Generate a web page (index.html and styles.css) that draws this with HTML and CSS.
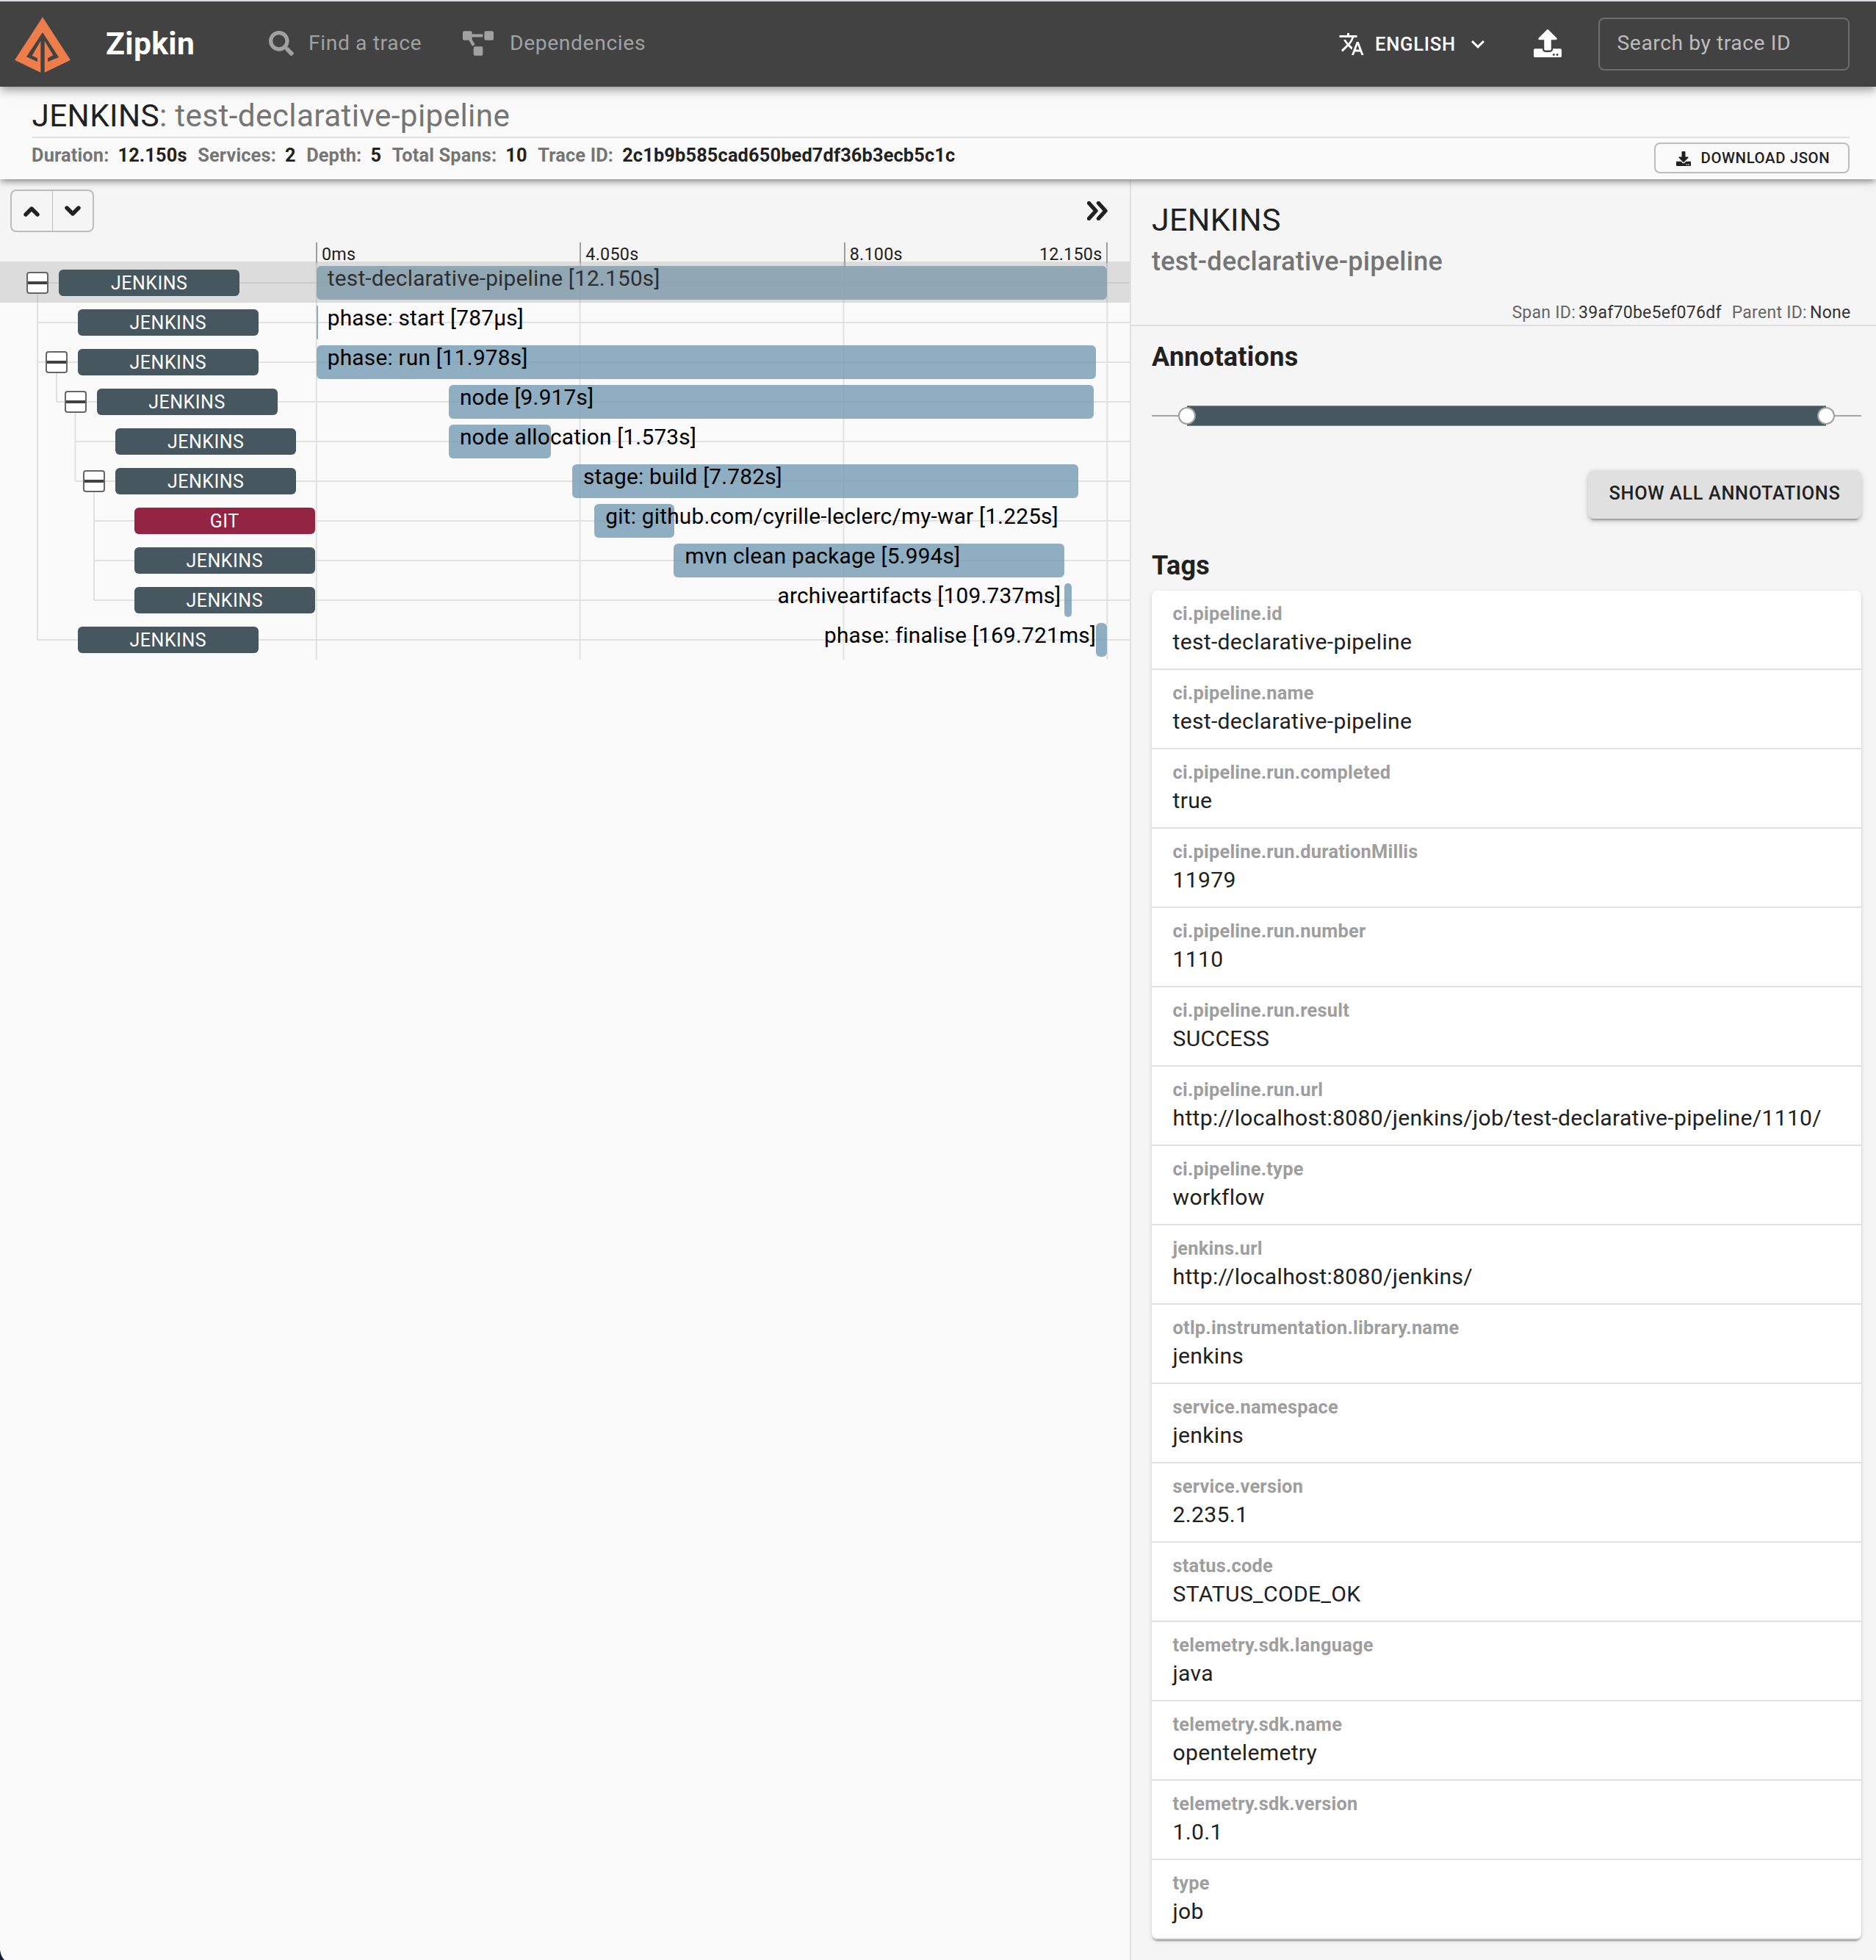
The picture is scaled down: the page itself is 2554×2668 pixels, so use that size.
FILE: index.html
```html
<!DOCTYPE html>
<html lang="en">
<head>
<meta charset="utf-8">
<title>Zipkin</title>
<link rel="stylesheet" href="styles.css">
</head>
<body>
<header class="appbar">
  <svg class="logo" viewBox="60 68 228 226"><path d="M174 68 288 243 182 294V165L217 223 195 236V250L240 232 174 130 108 230 153 250V236L131 225 166 165V294L60 243Z"/></svg>
  <div class="brand">Zipkin</div>
  <nav class="nav">
    <a class="nav-link"><svg class="ico-search" viewBox="0 0 512 512"><path d="M505 442.7L405.3 343c-4.5-4.5-10.6-7-17-7H372c27.6-35.3 44-79.7 44-128C416 93.1 322.9 0 208 0S0 93.1 0 208s93.1 208 208 208c48.3 0 92.7-16.4 128-44v16.3c0 6.4 2.5 12.5 7 17l99.7 99.7c9.4 9.4 24.6 9.4 33.9 0l28.3-28.3c9.4-9.4 9.4-24.6.1-34zM208 336c-70.7 0-128-57.2-128-128 0-70.7 57.2-128 128-128 70.7 0 128 57.2 128 128 0 70.7-57.2 128-128 128z"/></svg><span>Find a trace</span></a>
    <a class="nav-link"><svg class="ico-deps" viewBox="0 0 640 512"><path d="M384 320H256c-17.67 0-32 14.33-32 32v128c0 17.67 14.33 32 32 32h128c17.67 0 32-14.33 32-32V352c0-17.67-14.33-32-32-32zM192 32c0-17.67-14.33-32-32-32H32C14.33 0 0 14.33 0 32v128c0 17.67 14.33 32 32 32h95.72l73.16 128.04C211.98 300.98 232.4 288 256 288h.28L192 175.51V128h224V64H192V32zM608 0H480c-17.67 0-32 14.33-32 32v128c0 17.67 14.33 32 32 32h128c17.67 0 32-14.33 32-32V32c0-17.67-14.33-32-32-32z"/></svg><span>Dependencies</span></a>
  </nav>
  <div class="tools">
    <div class="language">
      <svg class="ico36" viewBox="0 0 24 24"><path d="M12.87 15.07l-2.54-2.51.03-.03c1.74-1.94 2.98-4.17 3.71-6.53H17V4h-7V2H8v2H1v1.99h11.17C11.5 7.92 10.44 9.75 9 11.35 8.07 10.32 7.3 9.19 6.69 8h-2c.73 1.63 1.73 3.17 2.98 4.56l-5.09 5.02L4 19l5-5 3.11 3.11.76-2.04zM18.5 10h-2L12 22h2l1.12-3h4.75L21 22h2l-4.5-12zm-2.62 7l1.62-4.33L19.12 17h-3.24z"/></svg>
      <span class="language-name">ENGLISH</span>
      <svg class="ico36" viewBox="0 0 24 24"><path d="M16.59 8.59L12 13.17 7.41 8.59 6 10l6 6 6-6z"/></svg>
    </div>
    <svg class="ico-upload" viewBox="0 0 512 512"><path d="M296 384h-80c-13.3 0-24-10.7-24-24V192h-87.7c-17.8 0-26.7-21.5-14.1-34.1L242.3 5.7c7.5-7.5 19.8-7.5 27.3 0l152.2 152.2c12.6 12.6 3.7 34.1-14.1 34.1H320v168c0 13.3-10.7 24-24 24zm216-8v112c0 13.3-10.7 24-24 24H24c-13.3 0-24-10.7-24-24V376c0-13.3 10.7-24 24-24h136v8c0 30.9 25.1 56 56 56h80c30.9 0 56-25.1 56-56v-8h136c13.3 0 24 10.7 24 24zm-124 88c0-11-9-20-20-20s-20 9-20 20 9 20 20 20 20-9 20-20zm64 0c0-11-9-20-20-20s-20 9-20 20 9 20 20 20 20-9 20-20z"/></svg>
    <div class="trace-search">Search by trace ID</div>
  </div>
</header>

<section class="summary">
  <h1 class="summary-title"><span class="strong">JENKINS</span>: test-declarative-pipeline</h1>
  <div class="summary-row">
    <dl class="facts">
      <div class="fact"><dt>Duration:</dt><dd>12.150s</dd></div>
      <div class="fact"><dt>Services:</dt><dd>2</dd></div>
      <div class="fact"><dt>Depth:</dt><dd>5</dd></div>
      <div class="fact"><dt>Total Spans:</dt><dd>10</dd></div>
      <div class="fact"><dt>Trace ID:</dt><dd>2c1b9b585cad650bed7df36b3ecb5c1c</dd></div>
    </dl>
    <div class="download"><svg class="ico-download" viewBox="0 0 512 512"><path d="M216 0h80c13.3 0 24 10.7 24 24v168h87.7c17.8 0 26.7 21.5 14.1 34.1L269.7 378.3c-7.5 7.5-19.8 7.5-27.3 0L90.1 226.1c-12.6-12.6-3.7-34.1 14.1-34.1H192V24c0-13.3 10.7-24 24-24zm296 376v112c0 13.3-10.7 24-24 24H24c-13.3 0-24-10.7-24-24V376c0-13.3 10.7-24 24-24h146.7l49 49c20.1 20.1 52.5 20.1 72.6 0l49-49H488c13.3 0 24 10.7 24 24zm-124 88c0-11-9-20-20-20s-20 9-20 20 9 20 20 20 20-9 20-20zm64 0c0-11-9-20-20-20s-20 9-20 20 9 20 20 20 20-9 20-20z"/></svg><span>DOWNLOAD JSON</span></div>
  </div>
</section>

<main class="main">
  <section class="timeline">
    <div class="timeline-head">
      <div class="controls">
        <div class="stepper">
          <span class="step"><svg viewBox="0 0 22 15"><path d="M3 12 11 4 19 12"/></svg></span>
          <span class="step"><svg viewBox="0 0 22 15"><path d="M3 3 11 11 19 3"/></svg></span>
        </div>
        <svg class="ico-expand" viewBox="0 0 28 26"><path d="M2.5 2.5 12 13 2.5 23.5M15.5 2.5 25 13 15.5 23.5"/></svg>
      </div>
      <div class="axis"><span class="tick">0ms</span><span class="tick">4.050s</span><span class="tick tick-last">8.100s<span>12.150s</span></span></div>
    </div>
    <div class="rows">
      <svg class="guides" viewBox="0 0 1538 540" fill="none">
        <path class="guide" d="M51 27V513M77 135V189M102.500 189V297M128 297V459"/>
        <path class="guide" d="M51 27H1538M51 81H1538M51 135H1538M77 189H1538M102.500 243H1538M102.500 297H1538M128 351H1538M128 405H1538M128 459H1538M51 513H1538"/>
        <path class="guide" d="M430.800 0V540M789.500 0V540M1148.500 0V540M1507.300 0V540"/>
      </svg>
      <div class="row selected" style="--depth:0;--start:0%;--width:100%"><div class="node"><i class="toggle"></i><span class="badge">JENKINS</span></div><div class="track"><div class="bar"><span class="label">test-declarative-pipeline [12.150s]</span></div></div></div>
      <div class="row" style="--depth:1;--start:0%;--width:.2%"><div class="node"><i class="leaf"></i><span class="badge">JENKINS</span></div><div class="track"><div class="bar"><span class="label">phase: start [787µs]</span></div></div></div>
      <div class="row" style="--depth:1;--start:0%;--width:98.58%"><div class="node"><i class="toggle"></i><span class="badge">JENKINS</span></div><div class="track"><div class="bar"><span class="label">phase: run [11.978s]</span></div></div></div>
      <div class="row" style="--depth:2;--start:16.73%;--width:81.58%"><div class="node"><i class="toggle"></i><span class="badge">JENKINS</span></div><div class="track"><div class="bar"><span class="label">node [9.917s]</span></div></div></div>
      <div class="row" style="--depth:3;--start:16.73%;--width:12.95%"><div class="node"><i class="leaf"></i><span class="badge">JENKINS</span></div><div class="track"><div class="bar"><span class="label">node allocation [1.573s]</span></div></div></div>
      <div class="row" style="--depth:3;--start:32.34%;--width:64.05%"><div class="node"><i class="toggle"></i><span class="badge">JENKINS</span></div><div class="track"><div class="bar"><span class="label">stage: build [7.782s]</span></div></div></div>
      <div class="row" style="--depth:4;--start:35.16%;--width:10.08%"><div class="node"><i class="leaf"></i><span class="badge git">GIT</span></div><div class="track"><div class="bar"><span class="label">git: github.com/cyrille-leclerc/my-war [1.225s]</span></div></div></div>
      <div class="row" style="--depth:4;--start:45.22%;--width:49.33%"><div class="node"><i class="leaf"></i><span class="badge">JENKINS</span></div><div class="track"><div class="bar"><span class="label">mvn clean package [5.994s]</span></div></div></div>
      <div class="row" style="--depth:4;--start:94.64%;--width:.9%"><div class="node"><i class="leaf"></i><span class="badge">JENKINS</span></div><div class="track"><div class="bar"><span class="label before spaced">archiveartifacts [109.737ms]</span></div></div></div>
      <div class="row" style="--depth:1;--start:98.6%;--width:1.4%"><div class="node"><i class="leaf"></i><span class="badge">JENKINS</span></div><div class="track"><div class="bar"><span class="label before">phase: finalise [169.721ms]</span></div></div></div>
    </div>
  </section>

  <aside class="detail">
    <div class="detail-head">
      <h2 class="service">JENKINS</h2>
      <h3 class="span-name">test-declarative-pipeline</h3>
      <div class="ids"><span>Span ID:<b>39af70be5ef076df</b></span><span>Parent ID:<b>None</b></span></div>
    </div>
    <div class="detail-body">
      <h4 class="heading">Annotations</h4>
      <div class="slider"><i class="knob"></i><i class="range"></i><i class="knob"></i></div>
      <div class="show-all">SHOW ALL ANNOTATIONS</div>
      <h4 class="heading heading-tags">Tags</h4>
      <dl class="tags">
        <div class="tag"><dt>ci.pipeline.id</dt><dd>test-declarative-pipeline</dd></div>
        <div class="tag"><dt>ci.pipeline.name</dt><dd>test-declarative-pipeline</dd></div>
        <div class="tag"><dt>ci.pipeline.run.completed</dt><dd>true</dd></div>
        <div class="tag"><dt>ci.pipeline.run.durationMillis</dt><dd>11979</dd></div>
        <div class="tag"><dt>ci.pipeline.run.number</dt><dd>1110</dd></div>
        <div class="tag"><dt>ci.pipeline.run.result</dt><dd>SUCCESS</dd></div>
        <div class="tag"><dt>ci.pipeline.run.url</dt><dd>http://localhost:8080/jenkins/job/test-declarative-pipeline/1110/</dd></div>
        <div class="tag"><dt>ci.pipeline.type</dt><dd>workflow</dd></div>
        <div class="tag"><dt>jenkins.url</dt><dd>http://localhost:8080/jenkins/</dd></div>
        <div class="tag"><dt>otlp.instrumentation.library.name</dt><dd>jenkins</dd></div>
        <div class="tag"><dt>service.namespace</dt><dd>jenkins</dd></div>
        <div class="tag"><dt>service.version</dt><dd>2.235.1</dd></div>
        <div class="tag"><dt>status.code</dt><dd>STATUS_CODE_OK</dd></div>
        <div class="tag"><dt>telemetry.sdk.language</dt><dd>java</dd></div>
        <div class="tag"><dt>telemetry.sdk.name</dt><dd>opentelemetry</dd></div>
        <div class="tag"><dt>telemetry.sdk.version</dt><dd>1.0.1</dd></div>
        <div class="tag"><dt>type</dt><dd>job</dd></div>
      </dl>
    </div>
  </aside>
</main>
<svg class="corner" viewBox="0 0 6 14"><path d="M0 0Q1 9 6 14H0Z"/></svg>
</body>
</html>
```
FILE: styles.css
```css
* { box-sizing: border-box; }

body {
  margin: 0;
  width: 2554px;
  height: 2668px;
  overflow: hidden;
  position: relative;
  display: flex;
  flex-direction: column;
  background: #fafafa;
  color: #212121;
  font-family: Roboto, sans-serif;
  font-size: 30px;
}

h1, h2, h3, h4, dl, dt, dd { margin: 0; font-weight: 400; }
svg { display: block; flex: none; fill: currentColor; }

/* Top bar */
.appbar {
  height: 118px;
  flex: none;
  border-top: 2px solid #dbdae2;
  background: #424242;
  color: #fff;
  display: flex;
  align-items: center;
  padding: 0 36px 0 20px;
  position: relative;
  z-index: 3;
  box-shadow: 0 4px 8px -2px rgba(0, 0, 0, .2), 0 8px 10px rgba(0, 0, 0, .14), 0 2px 20px rgba(0, 0, 0, .12);
}
.logo { width: 76px; height: 76px; color: #ed7d4b; margin-top: 1px; }
.brand { margin: -2px 0 0 48px; width: 222px; font-size: 42.6px; font-weight: 700; letter-spacing: .009em; }
.nav { display: flex; color: #a1a1a1; }
.nav-link { display: flex; align-items: center; font-size: 28.3px; letter-spacing: .021em; }
.nav-link span { margin-top: -4px; }
.nav-link:first-child { width: 264px; }
.ico-search { width: 34px; height: 34px; margin: -2px 20.5px 0 -.5px; }
.ico-deps { width: 42px; height: 34px; margin: -2px 22px 0 0; }
.tools { margin-left: auto; display: flex; align-items: center; }
.language { display: flex; align-items: center; width: 266.5px; }
.ico36 { width: 36px; height: 36px; }
.language-name { font-size: 25.6px; font-weight: 500; letter-spacing: .0286em; margin: -1px 0 0 14.5px; width: 122px; }
.ico-upload { width: 38px; height: 38px; margin-right: 50px; margin-top: -2px; }
.trace-search {
  width: 342px;
  height: 72px;
  border: 2px solid #6d6d6d;
  border-radius: 8px;
  padding-left: 23.5px;
  color: #bcbcbc;
  font-size: 28.3px;
  letter-spacing: .019em;
  line-height: 65px;
}

/* Trace summary */
.summary {
  height: 126px;
  flex: none;
  background: #fafafa;
  padding: 0 36px 0 43.5px;
  position: relative;
  z-index: 2;
  box-shadow: 0 6px 6px -4px rgba(0, 0, 0, .2), 0 4px 8px rgba(0, 0, 0, .2), 0 2px 16px rgba(0, 0, 0, .12);
}
.summary-title {
  height: 70px;
  line-height: 79px;
  border-bottom: 2px solid #e0e0e0;
  color: #757575;
  font-size: 42.3px;
  letter-spacing: .0085em;
}
.strong { color: #212121; }
.summary-row { display: flex; justify-content: space-between; height: 54px; padding-top: 6px; }
.facts { display: flex; gap: 14.5px; margin-left: -.5px; font-size: 25.35px; letter-spacing: .0062em; line-height: 35px; }
.fact { display: flex; gap: 12px; }
.facts dt { color: #757575; font-weight: 700; }
.facts dd { font-weight: 700; }
.download {
  width: 266px;
  height: 42px;
  border: 2px solid #bdbdbd;
  border-radius: 8px;
  display: flex;
  align-items: center;
  padding-left: 28px;
  gap: 13.5px;
  font-size: 20.4px;
  font-weight: 500;
  letter-spacing: .029em;
}
.ico-download { width: 20px; height: 20px; margin-top: 2px; }

/* Timeline */
.main { display: flex; flex: 1; min-height: 0; }
.timeline { width: 1538px; flex: none; }
.timeline-head { height: 112px; background: #f5f5f5; padding-top: 14px; }
.controls { display: flex; justify-content: space-between; padding: 0 30px 0 14px; }
.stepper { display: flex; width: 114px; height: 58px; border: 2px solid #bdbdbd; border-radius: 8px; }
.step { flex: 1; display: flex; justify-content: center; padding-top: 20px; }
.step + .step { border-left: 1px solid #bdbdbd; }
.step svg { width: 22px; height: 15px; }
.step path, .ico-expand path { fill: none; stroke: #212121; stroke-width: 5.4; stroke-linecap: round; stroke-linejoin: round; }
.ico-expand { width: 28px; height: 26px; margin-top: 16px; }
.axis { display: grid; grid-template-columns: repeat(3, 1fr); height: 26px; margin: 14px 30px 0 430px; }
.tick {
  border-left: 2px solid #9e9e9e;
  padding-left: 6px;
  font-size: 23.3px;
  letter-spacing: .012em;
  line-height: 33px;
}
.tick-last { border-right: 2px solid #9e9e9e; padding-right: 5.5px; display: flex; justify-content: space-between; }

.rows { position: relative; padding-top: 2px; }
.guides { position: absolute; left: 0; top: 2px; width: 1538px; height: 540px; }
.guide { stroke: #e1e1e1; stroke-width: 2; }
.row { height: 54px; display: grid; grid-template-columns: 430.6px 1076.6px; position: relative; }
.selected::after { content: ""; position: absolute; inset: -2px 0 0; background: rgba(152, 152, 152, .3); }
.node { display: flex; align-items: center; padding-left: calc(36.2px + var(--depth) * 25.65px); z-index: 1; }
.toggle, .leaf { width: 30px; height: 30px; margin-right: 14px; flex: none; }
.toggle {
  border: 2px solid #666;
  border-radius: 4px;
  background: linear-gradient(#424242, #424242) center / 100% 4px no-repeat #fff;
}
.badge {
  width: 246px;
  height: 36px;
  flex: none;
  border-radius: 6px;
  background: #47575f;
  color: #fff;
  text-align: center;
  font-size: 25px;
  letter-spacing: .02em;
  line-height: 38px;
}
.git { background: #942443; }
.track { display: flex; align-items: center; }
.bar {
  position: relative;
  margin-left: var(--start);
  width: var(--width);
  height: 46.6px;
  flex: none;
  border-radius: 6px;
  background: rgba(116, 155, 179, .8);
}
.label {
  position: absolute;
  left: 15.2px;
  top: 0;
  color: #000;
  font-size: 29.8px;
  letter-spacing: .0075em;
  line-height: 33px;
  white-space: nowrap;
}
.before { left: auto; right: 100%; }
.spaced { right: calc(100% + 5px); }

/* Span detail */
.detail { flex: 1; background: #f5f5f5; border-left: 2px solid #e0e0e0; }
.detail-head { height: 200px; border-bottom: 2px solid #e0e0e0; padding: 30px 34.5px 0 28px; }
.service { font-size: 43px; letter-spacing: .007em; line-height: 50px; }
.span-name { margin-top: 11px; color: #757575; font-size: 36px; font-weight: 500; letter-spacing: .0075em; line-height: 42px; }
.ids { display: flex; justify-content: flex-end; gap: 14px; margin-top: 34px; color: #666; font-size: 23px; letter-spacing: .012em; line-height: 30px; }
.ids b { font-weight: 400; color: #333; margin-left: 4px; }
.detail-body { padding: 21px 20px 0 28px; }
.heading { font-size: 36px; font-weight: 700; letter-spacing: .0075em; line-height: 42px; }
.slider {
  height: 28px;
  margin-top: 45px;
  padding: 0 36px;
  display: flex;
  align-items: center;
  background: linear-gradient(#a3a3a3, #a3a3a3) center / 100% 2px no-repeat;
}
.range { flex: 1; height: 28px; margin: 0 -12px; background: #47575f; border: solid #8a9499; border-width: 1px 0; }
.knob { width: 24px; height: 24px; border-radius: 50%; background: #fff; border: 2px solid #9e9e9e; position: relative; z-index: 1; }
.show-all {
  width: 372px;
  height: 66px;
  margin: 60px 0 0 auto;
  border-radius: 8px;
  background: #e0e0e0;
  text-align: center;
  font-size: 25.3px;
  font-weight: 500;
  letter-spacing: .0255em;
  line-height: 64px;
  box-shadow: 0 6px 2px -4px rgba(0, 0, 0, .2), 0 4px 4px rgba(0, 0, 0, .14), 0 2px 10px rgba(0, 0, 0, .12);
}
.heading-tags { margin-top: 43px; }
.tags {
  margin-top: 13px;
  border-radius: 8px;
  overflow: hidden;
  background: #fff;
  box-shadow: 0 4px 2px -2px rgba(0, 0, 0, .2), 0 2px 2px rgba(0, 0, 0, .14), 0 2px 6px rgba(0, 0, 0, .12);
}
.tag { height: 108px; border-bottom: 2px solid #e0e0e0; padding: 13px 28px 0 28.5px; }
.tag dt { color: #9e9e9e; font-size: 25.4px; font-weight: 700; letter-spacing: .009em; line-height: 36px; }
.tag dd { margin-top: 1px; font-size: 30.1px; letter-spacing: .0103em; line-height: 40px; }

.corner { position: absolute; left: 0; bottom: 0; width: 6px; height: 14px; color: #101c38; }
```
